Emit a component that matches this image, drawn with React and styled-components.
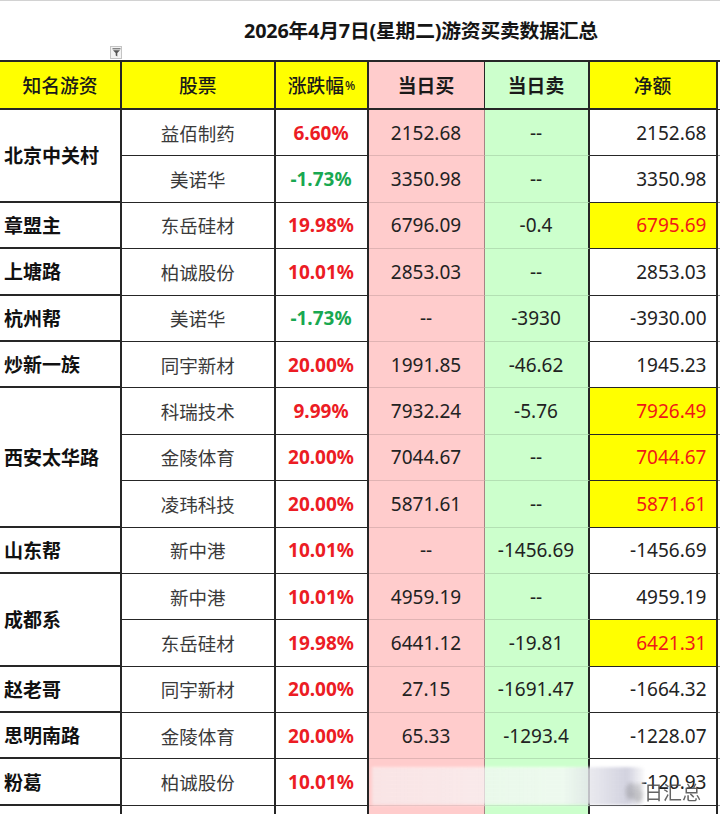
import React from 'react';
import styled, { createGlobalStyle } from 'styled-components';

const GlobalStyle = createGlobalStyle`
  html, body {
    margin: 0;
    padding: 0;
    background: #fff;
  }
  body {
    font-family: "Noto Sans", "Noto Sans CJK SC", sans-serif;
    color: #222;
  }
`;

const LINE = '#262626';
const PINK = '#ffcccc';
const GREEN = '#ccffcc';
const YELLOW = '#ffff00';

const headers = [
    { text: '知名游资', bg: YELLOW },
    { text: '股票', bg: YELLOW },
    { text: '涨跌幅', unit: '%', bg: YELLOW },
    { text: '当日买', bg: PINK, strong: true },
    { text: '当日卖', bg: GREEN, strong: true },
    { text: '净额', bg: YELLOW },
];

const rows = [
    { name: '北京中关村', span: 2, stock: '益佰制药', pct: '6.60%', buy: '2152.68', sell: '--', net: '2152.68' },
    { stock: '美诺华', pct: '-1.73%', buy: '3350.98', sell: '--', net: '3350.98' },
    { name: '章盟主', stock: '东岳硅材', pct: '19.98%', buy: '6796.09', sell: '-0.4', net: '6795.69', hl: true },
    { name: '上塘路', stock: '柏诚股份', pct: '10.01%', buy: '2853.03', sell: '--', net: '2853.03' },
    { name: '杭州帮', stock: '美诺华', pct: '-1.73%', buy: '--', sell: '-3930', net: '-3930.00' },
    { name: '炒新一族', stock: '同宇新材', pct: '20.00%', buy: '1991.85', sell: '-46.62', net: '1945.23' },
    { name: '西安太华路', span: 3, stock: '科瑞技术', pct: '9.99%', buy: '7932.24', sell: '-5.76', net: '7926.49', hl: true },
    { stock: '金陵体育', pct: '20.00%', buy: '7044.67', sell: '--', net: '7044.67', hl: true },
    { stock: '凌玮科技', pct: '20.00%', buy: '5871.61', sell: '--', net: '5871.61', hl: true },
    { name: '山东帮', stock: '新中港', pct: '10.01%', buy: '--', sell: '-1456.69', net: '-1456.69' },
    { name: '成都系', span: 2, stock: '新中港', pct: '10.01%', buy: '4959.19', sell: '--', net: '4959.19' },
    { stock: '东岳硅材', pct: '19.98%', buy: '6441.12', sell: '-19.81', net: '6421.31', hl: true },
    { name: '赵老哥', stock: '同宇新材', pct: '20.00%', buy: '27.15', sell: '-1691.47', net: '-1664.32' },
    { name: '思明南路', stock: '金陵体育', pct: '20.00%', buy: '65.33', sell: '-1293.4', net: '-1228.07' },
    { name: '粉葛', stock: '柏诚股份', pct: '10.01%', buy: '', sell: '', net: '-120.93' },
    { name: '', stock: '', pct: '', buy: '', sell: '', net: '' },
];

export default function App() {
    return (
        <Page>
            <GlobalStyle />
            <TitleBar>
                <FilterSlot>
                    <FilterButton>
                        <svg width="9" height="9" viewBox="0 0 9 9">
                            <path d="M0.5 0.8h8" stroke="#555" strokeWidth="1" />
                            <path d="M1 2.2h7L5.3 5v3.4L3.7 7.6V5z" fill="#555" />
                        </svg>
                    </FilterButton>
                </FilterSlot>
                <Title>2026年4月7日(星期二)游资买卖数据汇总</Title>
            </TitleBar>

            <Sheet>
                {headers.map(h => (
                    <HeadCell key={h.text} $bg={h.bg} $strong={h.strong} $split={h.bg === PINK}>
                        {h.text}
                        {h.unit && <Unit>{h.unit}</Unit>}
                    </HeadCell>
                ))}
                <EdgeCell $head />

                {rows.map((r, i) => (
                    <React.Fragment key={i}>
                        {r.name !== undefined && <NameCell $span={r.span || 1}>{r.name}</NameCell>}
                        <StockCell>{r.stock}</StockCell>
                        <PctCell $down={r.pct.startsWith('-')}>{r.pct}</PctCell>
                        <BuyCell>{r.buy}</BuyCell>
                        <SellCell>{r.sell}</SellCell>
                        <NetCell $hl={r.hl}>{r.net}</NetCell>
                        <EdgeCell />
                    </React.Fragment>
                ))}
            </Sheet>

            <Smear />
            <Watermark><Faded>每</Faded>日汇总</Watermark>
        </Page>
    );
}

const Page = styled.div`
    position: relative;
    width: 720px;
    height: 814px;
    overflow: hidden;
    background: #fff;
    box-shadow: inset 0 1px 0 #d2d2d2;
`

const TitleBar = styled.div`
    display: grid;
    grid-template-columns: 122px 1fr;
    height: 60px;
`

const FilterSlot = styled.div`
    display: flex;
    justify-content: flex-end;
    align-items: flex-end;
    padding-bottom: 1px;
`

const FilterButton = styled.div`
    width: 12px;
    height: 13px;
    box-sizing: border-box;
    border: 1px solid #c4c4c4;
    background: #f3f3f3;
    display: flex;
    justify-content: center;
    align-items: center;
`

const Title = styled.div`
    display: flex;
    justify-content: center;
    align-items: center;
    padding-bottom: 2px;
    font-size: 19.8px;
    font-weight: 700;
    color: #151515;
    letter-spacing: -0.2px;
`

const Sheet = styled.div`
    display: grid;
    grid-template-columns: 122px 153.5px 93px 116px 105px 128px 1fr;
    grid-template-rows: 48px repeat(16, 46.4px);
    border-top: 2px solid ${LINE};
`

const Cell = styled.div`
    box-sizing: border-box;
    display: flex;
    align-items: center;
    justify-content: center;
    white-space: nowrap;
    overflow: hidden;
    font-size: 19px;
    color: #222;
    background: #fff;
    border-right: 2px solid ${LINE};
    border-bottom: 2px solid ${LINE};
`

const HeadCell = styled(Cell)`
    background: ${p => p.$bg};
    font-size: 18.8px;
    font-weight: ${p => (p.$strong ? 700 : 500)};
    color: #1a1a1a;
    padding-bottom: 1px;
    border-right-width: ${p => (p.$split ? '1.5px' : '2px')};
`

const Unit = styled.span`
    font-size: 12px;
    letter-spacing: -1px;
    margin-left: 1px;
    margin-top: 2px;
`

const NameCell = styled(Cell)`
    grid-row: span ${p => p.$span};
    justify-content: flex-start;
    padding-left: 4px;
    font-weight: 700;
    color: #111;
`

const StockCell = styled(Cell)`
    font-size: 18.5px;
    color: #3a3a3a;
    border-bottom-width: 1.5px;
`

const PctCell = styled(Cell)`
    font-weight: 700;
    color: ${p => (p.$down ? '#19a851' : '#ec1c24')};
    border-bottom-width: 1.5px;
`

const BuyCell = styled(Cell)`
    background: ${PINK};
    border-right: 1px solid rgba(0, 0, 0, 0.35);
    border-bottom: 1px solid rgba(0, 0, 0, 0.12);
`

const SellCell = styled(Cell)`
    background: ${GREEN};
    border-bottom: 1px solid rgba(0, 0, 0, 0.12);
`

const NetCell = styled(Cell)`
    justify-content: flex-end;
    padding-right: 9px;
    background: ${p => (p.$hl ? YELLOW : '#fff')};
    color: ${p => (p.$hl ? '#f01818' : '#222')};
    border-bottom-width: 1.5px;
`

const EdgeCell = styled(Cell)`
    border-right: none;
    border-bottom: 1.5px solid ${p => (p.$head ? LINE : '#8a8a8a')};
    background: #fff;
`

const Smear = styled.div`
    position: absolute;
    left: 372px;
    top: 767px;
    width: 272px;
    height: 38px;
    background:
        repeating-linear-gradient(to bottom, rgba(255, 255, 255, 0) 0 3px, rgba(190, 190, 200, 0.35) 3px 4px),
        linear-gradient(to right, rgba(255, 255, 255, 0.55), rgba(255, 255, 255, 0.75) 70%, rgba(205, 205, 220, 0.85) 94%, rgba(255, 255, 255, 0.4));
    filter: blur(1.5px);
`

const Watermark = styled.div`
    position: absolute;
    left: 625px;
    top: 778px;
    font-family: "Noto Sans CJK SC", sans-serif;
    font-size: 19px;
    color: #4a4a4a;
    opacity: 0.85;
`

const Faded = styled.span`
    display: inline-block;
    filter: blur(2px);
    opacity: 0.6;
`
